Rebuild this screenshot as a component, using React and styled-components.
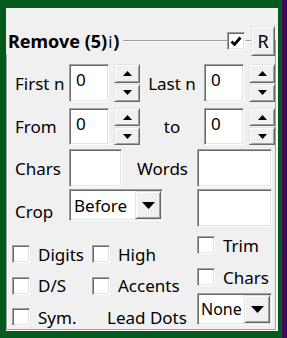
import React from "react";
import styled, { createGlobalStyle } from "styled-components";

const GlobalStyle = createGlobalStyle`
  html, body { margin: 0; padding: 0; }
  body { font-family: "Noto Sans", "Open Sans", sans-serif; color: #000; }
  * { box-sizing: border-box; }
`;

const sunken = `
  border: 1px solid;
  border-color: #a0a0a0 #ffffff #ffffff #a0a0a0;
  box-shadow: inset 1px 1px 0 #696969, inset -1px -1px 0 #e3e3e3;
`;

const raised = `
  border: 1px solid;
  border-color: #e3e3e3 #696969 #696969 #e3e3e3;
  box-shadow: inset 1px 1px 0 #ffffff, inset -1px -1px 0 #a0a0a0;
`;

const Frame = styled.div`
  width: 287px;
  height: 338px;
  background: #055a1e;
  border-right: 5px solid #3b0a5c;
  padding: 8px 4px 7px 6px;
  display: flex;
`;

const Panel = styled.div`
  flex: 1;
  background: #f0f0f0;
  padding: 32px 2px 0 0;
`;

const GroupBox = styled.div`
  border: 1px solid #a0a0a0;
  box-shadow: inset 1px 1px 0 #ffffff, 1px 1px 0 #ffffff;
  padding-bottom: 3px;
`;

const Header = styled.div`
  display: flex;
  align-items: center;
  height: 30px;
  margin: -15px 0 0 -1px;
`;

const Title = styled.div`
  background: #f0f0f0;
  font-weight: 700;
  font-size: 18px;
  line-height: 24px;
  padding: 0 4px 0 2px;
  white-space: nowrap;
`;

const Thin = styled.span`
  font-weight: 400;
  font-size: 16px;
  margin: 0 1px;
`;

const Spacer = styled.div`
  flex: ${(p) => (p.$w ? "none" : 1)};
  width: ${(p) => (p.$w ? `${p.$w}px` : "auto")};
`;

const CheckBox = styled.div`
  width: ${(p) => p.$size || 18}px;
  height: ${(p) => p.$size || 18}px;
  flex: none;
  background: #fff;
  ${sunken}
  display: flex;
  align-items: center;
  justify-content: center;
`;

const PushButton = styled.div`
  width: 24px;
  height: 30px;
  flex: none;
  background: #f0f0f0;
  ${raised}
  display: flex;
  align-items: center;
  justify-content: center;
  font-size: 18px;
`;

const Row = styled.div`
  display: flex;
  align-items: ${(p) => p.$align || "center"};
  height: ${(p) => p.$h}px;
  margin-top: ${(p) => p.$mt}px;
  padding-left: 8px;
`;

const Label = styled.div`
  width: ${(p) => p.$w}px;
  flex: none;
  font-size: 17px;
  white-space: nowrap;
  text-align: ${(p) => p.$ta || "left"};
  padding-right: ${(p) => p.$pr || 0}px;
  margin-top: ${(p) => p.$mt || 0}px;
`;

const TextBox = styled.div`
  width: ${(p) => p.$w}px;
  height: ${(p) => p.$h}px;
  flex: none;
  background: #fff;
  ${sunken}
  padding: 3px 0 0 6px;
  font-size: 17px;
  line-height: 23px;
`;

const Spinner = styled.div`
  width: 26px;
  height: 100%;
  flex: none;
  margin-left: 5px;
  display: flex;
  flex-direction: column;
  gap: 1px;
`;

const SpinButton = styled.div`
  flex: 1;
  background: #f0f0f0;
  ${raised}
  display: flex;
  align-items: center;
  justify-content: center;
`;

const Dropdown = styled.div`
  width: ${(p) => p.$w}px;
  height: 32px;
  flex: none;
  background: #fff;
  ${sunken}
  padding: 1px;
  display: flex;
  align-items: stretch;
`;

const DropText = styled.div`
  flex: 1;
  min-width: 0;
  font-size: ${(p) => p.$fs || 17}px;
  padding-left: ${(p) => p.$pl || 3}px;
  display: flex;
  align-items: center;
  white-space: nowrap;
`;

const DropButton = styled.div`
  width: 26px;
  flex: none;
  background: #f0f0f0;
  ${raised}
  display: flex;
  align-items: center;
  justify-content: center;
`;

const Bottom = styled.div`
  display: flex;
  padding-left: 5px;
`;

const LeftGrid = styled.div`
  display: grid;
  grid-template-columns: 80px 105px;
  grid-auto-rows: 18px;
  row-gap: 13.5px;
  margin-top: 18px;
`;

const RightCol = styled.div`
  width: 75px;
  margin-top: 9px;
  display: flex;
  flex-direction: column;
`;

const CheckItem = styled.div`
  display: flex;
  align-items: center;
  gap: 8px;
  height: 18px;
  margin-top: ${(p) => p.$mt || 0}px;
  font-size: 17px;
  white-space: nowrap;
`;

const SelectSlot = styled.div`
  margin-top: 7px;
  height: 32px;
  display: flex;
`;

const PlainCell = styled.div`
  display: flex;
  align-items: center;
  padding-left: ${(p) => p.$pl || 0}px;
  font-size: 17px;
  white-space: nowrap;
`;

const Arrow = ({ up, w = 9, h = 5 }) => (
  <svg width={w} height={h} viewBox={`0 0 ${w} ${h}`} style={{ display: "block" }}>
    <polygon
      points={up ? `0,${h} ${w},${h} ${w / 2},0` : `0,0 ${w},0 ${w / 2},${h}`}
      fill="#000"
    />
  </svg>
);

const Spin = () => (
  <Spinner>
    <SpinButton>
      <Arrow up />
    </SpinButton>
    <SpinButton>
      <Arrow />
    </SpinButton>
  </Spinner>
);

const Select = ({ w, value, pl, fs }) => (
  <Dropdown $w={w}>
    <DropText $pl={pl} $fs={fs}>{value}</DropText>
    <DropButton>
      <Arrow w={13} h={7} />
    </DropButton>
  </Dropdown>
);

const Check = ({ label, mt }) => (
  <CheckItem $mt={mt}>
    <CheckBox />
    {label}
  </CheckItem>
);

export default function App() {
  return (
    <>
      <GlobalStyle />
      <Frame>
        <Panel>
          <GroupBox>
            <Header>
              <Title>
                Remove (5)<Thin>i</Thin>)
              </Title>
              <Spacer />
              <CheckBox $size={18}>
                <svg width="12" height="11" viewBox="0 0 12 11">
                  <polyline
                    points="1.5,5.5 4.5,8.5 10.5,1.5"
                    fill="none"
                    stroke="#000"
                    strokeWidth="2.8"
                  />
                </svg>
              </CheckBox>
              <Spacer $w={6} />
              <PushButton>R</PushButton>
            </Header>

            <Row $h={38} $mt={8}>
              <Label $w={54}>First n</Label>
              <TextBox $w={40} $h={38}>0</TextBox>
              <Spin />
              <Label $w={64} $ta="center">Last n</Label>
              <TextBox $w={40} $h={38}>0</TextBox>
              <Spin />
            </Row>

            <Row $h={37} $mt={6}>
              <Label $w={54}>From</Label>
              <TextBox $w={40} $h={37}>0</TextBox>
              <Spin />
              <Label $w={64} $ta="center">to</Label>
              <TextBox $w={40} $h={37}>0</TextBox>
              <Spin />
            </Row>

            <Row $h={38} $mt={4}>
              <Label $w={54}>Chars</Label>
              <TextBox $w={53} $h={38} />
              <Label $w={75} $ta="right" $pr={9}>Words</Label>
              <TextBox $w={75} $h={38} />
            </Row>

            <Row $h={38} $mt={2} $align="flex-start">
              <Label $w={54} $mt={11}>Crop</Label>
              <Select w={94} value="Before" />
              <Spacer $w={34} />
              <TextBox $w={75} $h={38} />
            </Row>

            <Bottom>
              <LeftGrid>
                <Check label="Digits" />
                <Check label="High" />
                <Check label="D/S" />
                <Check label="Accents" />
                <Check label="Sym." />
                <PlainCell $pl={15}>Lead Dots</PlainCell>
              </LeftGrid>
              <RightCol>
                <Check label="Trim" />
                <Check label="Chars" mt={14} />
                <SelectSlot>
                  <Select w={75} value="None" pl={2} fs={16} />
                </SelectSlot>
              </RightCol>
            </Bottom>
          </GroupBox>
        </Panel>
      </Frame>
    </>
  );
}
